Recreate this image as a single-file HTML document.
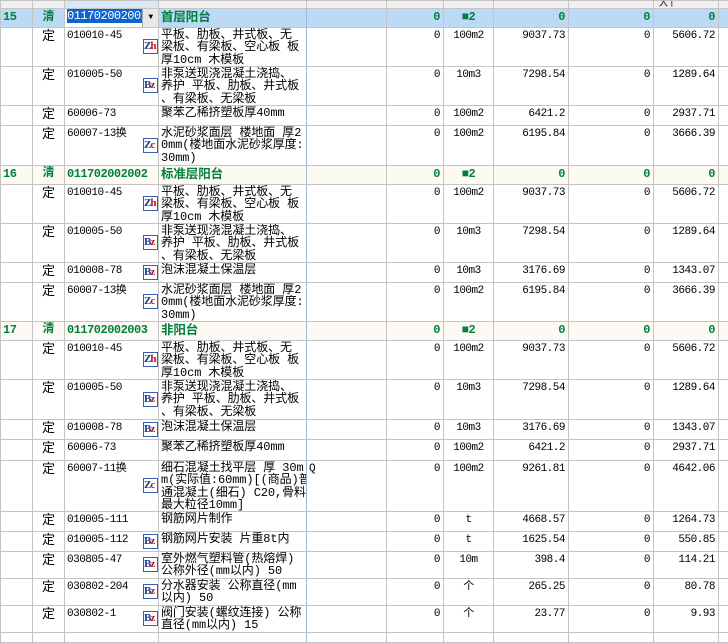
<!DOCTYPE html>
<html><head><meta charset="utf-8"><style>
body{margin:0;width:728px;height:634px;overflow:hidden;background:#fff;font-family:"Liberation Mono","Noto Sans CJK SC",monospace;}
table{border-collapse:collapse;table-layout:fixed;position:absolute;left:0;top:0;width:728px;}
td{border:1px solid #c4c4c4;padding:0;vertical-align:top;font-size:11px;line-height:12px;white-space:nowrap;overflow:hidden;position:relative;color:#000;letter-spacing:-0.5px}
td.n{text-align:right;padding-right:3px;padding-top:2px}
td.u{text-align:center;padding-top:2px}
td.t{text-align:center;font-family:"Noto Sans CJK SC",sans-serif;font-size:13px;padding-top:1px;letter-spacing:0}
td.c{padding-left:2px;padding-top:2px}
td.m{padding-left:2px;padding-top:1px;font-family:"Liberation Mono","Noto Sans CJK SC",monospace;font-size:12px;line-height:12.3px;letter-spacing:-0.1px}
td.nm{border-left:1px solid #9bb7d8;border-right:1px solid #9bb7d8}
tr.h td{background:#f0f0f0;height:7px}
tr.g td{background:#fcfaf2;color:#00803c;font-weight:bold;font-size:12px;font-family:"Liberation Mono","Noto Sans CJK SC",monospace}
tr.s td{background:#bcd9f5;color:#00803c;font-weight:bold;font-size:12px}
tr.g td.m,tr.s td.m{font-family:"Noto Sans CJK SC",sans-serif;font-size:12.5px;font-weight:bold}
.ic{position:absolute;right:0;top:50%;margin-top:-8px;width:13px;height:13px;border:1px solid #3a5fb0;background:#fff;font:bold 11px/13px "Liberation Serif",serif;letter-spacing:-1px;text-align:left;padding-left:0;overflow:hidden}
.ic b{color:#1a3a9a}.ic i{color:#c01010;font-style:normal}
</style></head><body>
<table>
<colgroup><col style="width:32px"><col style="width:32px"><col style="width:94px"><col style="width:148px"><col style="width:80px"><col style="width:57px"><col style="width:50px"><col style="width:75px"><col style="width:85px"><col style="width:65px"><col style="width:10px"></colgroup>
<tr class="h"><td></td><td></td><td style="background:#d8e8f8"></td><td></td><td></td><td></td><td></td><td></td><td></td><td style="font-size:9px;line-height:7px">&nbsp;入丨</td><td></td></tr>
<tr class="s" style="height:19px"><td class="c">15</td><td class="t" style="font-weight:bold">清</td><td style="background:#fff;padding:1px 0 0 2px"><span style="background:#1064d0;color:#fff;font-weight:normal">011702002001</span><span style="position:absolute;right:0;top:0;width:15px;height:18px;background:#e8e8e8;border-left:1px solid #aaa;font-size:8px;text-align:center;line-height:18px;color:#000">▼</span></td><td class="m nm">首层阳台</td><td></td><td class="n">0</td><td class="u">■2</td><td class="n">0</td><td class="n">0</td><td class="n">0</td><td></td></tr>
<tr style="height:39px"><td></td><td class="t">定</td><td class="c">010010-45<span class="ic"><b>Z</b><i>h</i></span></td><td class="m nm">平板、肋板、井式板、无<br>梁板、有梁板、空心板 板<br>厚10cm 木模板</td><td></td><td class="n">0</td><td class="u">100m2</td><td class="n">9037.73</td><td class="n">0</td><td class="n">5606.72</td><td></td></tr>
<tr style="height:39px"><td></td><td class="t">定</td><td class="c">010005-50<span class="ic"><b>B</b><i>z</i></span></td><td class="m nm">非泵送现浇混凝土浇捣、<br>养护 平板、肋板、井式板<br>、有梁板、无梁板</td><td></td><td class="n">0</td><td class="u">10m3</td><td class="n">7298.54</td><td class="n">0</td><td class="n">1289.64</td><td></td></tr>
<tr style="height:20px"><td></td><td class="t">定</td><td class="c">60006-73</td><td class="m nm">聚苯乙稀挤塑板厚40mm</td><td></td><td class="n">0</td><td class="u">100m2</td><td class="n">6421.2</td><td class="n">0</td><td class="n">2937.71</td><td></td></tr>
<tr style="height:40px"><td></td><td class="t">定</td><td class="c">60007-13换<span class="ic"><b>Z</b><i>c</i></span></td><td class="m nm">水泥砂浆面层 楼地面 厚2<br>0mm(楼地面水泥砂浆厚度:<br>30mm)</td><td></td><td class="n">0</td><td class="u">100m2</td><td class="n">6195.84</td><td class="n">0</td><td class="n">3666.39</td><td></td></tr>
<tr class="g" style="height:19px"><td class="c">16</td><td class="t" style="font-weight:bold">清</td><td class="c">011702002002</td><td class="m nm">标准层阳台</td><td></td><td class="n">0</td><td class="u">■2</td><td class="n">0</td><td class="n">0</td><td class="n">0</td><td></td></tr>
<tr style="height:39px"><td></td><td class="t">定</td><td class="c">010010-45<span class="ic"><b>Z</b><i>h</i></span></td><td class="m nm">平板、肋板、井式板、无<br>梁板、有梁板、空心板 板<br>厚10cm 木模板</td><td></td><td class="n">0</td><td class="u">100m2</td><td class="n">9037.73</td><td class="n">0</td><td class="n">5606.72</td><td></td></tr>
<tr style="height:39px"><td></td><td class="t">定</td><td class="c">010005-50<span class="ic"><b>B</b><i>z</i></span></td><td class="m nm">非泵送现浇混凝土浇捣、<br>养护 平板、肋板、井式板<br>、有梁板、无梁板</td><td></td><td class="n">0</td><td class="u">10m3</td><td class="n">7298.54</td><td class="n">0</td><td class="n">1289.64</td><td></td></tr>
<tr style="height:20px"><td></td><td class="t">定</td><td class="c">010008-78<span class="ic"><b>B</b><i>z</i></span></td><td class="m nm">泡沫混凝土保温层</td><td></td><td class="n">0</td><td class="u">10m3</td><td class="n">3176.69</td><td class="n">0</td><td class="n">1343.07</td><td></td></tr>
<tr style="height:39px"><td></td><td class="t">定</td><td class="c">60007-13换<span class="ic"><b>Z</b><i>c</i></span></td><td class="m nm">水泥砂浆面层 楼地面 厚2<br>0mm(楼地面水泥砂浆厚度:<br>30mm)</td><td></td><td class="n">0</td><td class="u">100m2</td><td class="n">6195.84</td><td class="n">0</td><td class="n">3666.39</td><td></td></tr>
<tr class="g" style="height:19px"><td class="c">17</td><td class="t" style="font-weight:bold">清</td><td class="c">011702002003</td><td class="m nm">非阳台</td><td></td><td class="n">0</td><td class="u">■2</td><td class="n">0</td><td class="n">0</td><td class="n">0</td><td></td></tr>
<tr style="height:39px"><td></td><td class="t">定</td><td class="c">010010-45<span class="ic"><b>Z</b><i>h</i></span></td><td class="m nm">平板、肋板、井式板、无<br>梁板、有梁板、空心板 板<br>厚10cm 木模板</td><td></td><td class="n">0</td><td class="u">100m2</td><td class="n">9037.73</td><td class="n">0</td><td class="n">5606.72</td><td></td></tr>
<tr style="height:40px"><td></td><td class="t">定</td><td class="c">010005-50<span class="ic"><b>B</b><i>z</i></span></td><td class="m nm">非泵送现浇混凝土浇捣、<br>养护 平板、肋板、井式板<br>、有梁板、无梁板</td><td></td><td class="n">0</td><td class="u">10m3</td><td class="n">7298.54</td><td class="n">0</td><td class="n">1289.64</td><td></td></tr>
<tr style="height:20px"><td></td><td class="t">定</td><td class="c">010008-78<span class="ic"><b>B</b><i>z</i></span></td><td class="m nm">泡沫混凝土保温层</td><td></td><td class="n">0</td><td class="u">10m3</td><td class="n">3176.69</td><td class="n">0</td><td class="n">1343.07</td><td></td></tr>
<tr style="height:21px"><td></td><td class="t">定</td><td class="c">60006-73</td><td class="m nm">聚苯乙稀挤塑板厚40mm</td><td></td><td class="n">0</td><td class="u">100m2</td><td class="n">6421.2</td><td class="n">0</td><td class="n">2937.71</td><td></td></tr>
<tr style="height:51px"><td></td><td class="t">定</td><td class="c">60007-11换<span class="ic"><b>Z</b><i>c</i></span></td><td class="m nm">细石混凝土找平层 厚 30m<br>m(实际值:60mm)[(商品)普<br>通混凝土(细石) C20,骨料<br>最大粒径10mm]</td><td class="c">Q</td><td class="n">0</td><td class="u">100m2</td><td class="n">9261.81</td><td class="n">0</td><td class="n">4642.06</td><td></td></tr>
<tr style="height:20px"><td></td><td class="t">定</td><td class="c">010005-111</td><td class="m nm">钢筋网片制作</td><td></td><td class="n">0</td><td class="u">t</td><td class="n">4668.57</td><td class="n">0</td><td class="n">1264.73</td><td></td></tr>
<tr style="height:20px"><td></td><td class="t">定</td><td class="c">010005-112<span class="ic"><b>B</b><i>z</i></span></td><td class="m nm">钢筋网片安装 片重8t内</td><td></td><td class="n">0</td><td class="u">t</td><td class="n">1625.54</td><td class="n">0</td><td class="n">550.85</td><td></td></tr>
<tr style="height:26px"><td></td><td class="t">定</td><td class="c">030805-47<span class="ic"><b>B</b><i>z</i></span></td><td class="m nm">室外燃气塑料管(热熔焊)<br>公称外径(mm以内) 50</td><td></td><td class="n">0</td><td class="u">10m</td><td class="n">398.4</td><td class="n">0</td><td class="n">114.21</td><td></td></tr>
<tr style="height:27px"><td></td><td class="t">定</td><td class="c">030802-204<span class="ic"><b>B</b><i>z</i></span></td><td class="m nm">分水器安装 公称直径(mm<br>以内) 50</td><td></td><td class="n">0</td><td class="u">个</td><td class="n">265.25</td><td class="n">0</td><td class="n">80.78</td><td></td></tr>
<tr style="height:27px"><td></td><td class="t">定</td><td class="c">030802-1<span class="ic"><b>B</b><i>z</i></span></td><td class="m nm">阀门安装(螺纹连接) 公称<br>直径(mm以内) 15</td><td></td><td class="n">0</td><td class="u">个</td><td class="n">23.77</td><td class="n">0</td><td class="n">9.93</td><td></td></tr>
<tr style="height:10px"><td></td><td></td><td></td><td class="nm"></td><td></td><td></td><td></td><td></td><td></td><td></td><td></td></tr>
</table>
</body></html>
